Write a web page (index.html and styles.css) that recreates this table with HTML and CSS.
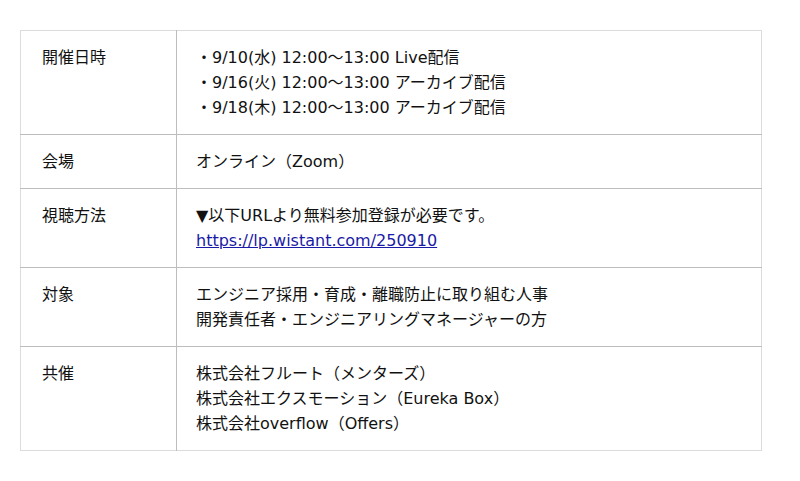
FILE: index.html
```html
<!DOCTYPE html>
<html lang="ja">
<head>
<meta charset="utf-8">
<link rel="stylesheet" href="styles.css">
</head>
<body>
<div class="page">
<table class="info">
  <tr>
    <th>開催日時</th>
    <td>・9/10(水) 12:00〜13:00 Live配信<br>・9/16(火) 12:00〜13:00 アーカイブ配信<br>・9/18(木) 12:00〜13:00 アーカイブ配信</td>
  </tr>
  <tr>
    <th>会場</th>
    <td>オンライン（Zoom）</td>
  </tr>
  <tr>
    <th>視聴方法</th>
    <td>▼以下URLより無料参加登録が必要です。<br><a href="#">https://lp.wistant.com/250910</a></td>
  </tr>
  <tr>
    <th>対象</th>
    <td>エンジニア採用・育成・離職防止に取り組む人事<br>開発責任者・エンジニアリングマネージャーの方</td>
  </tr>
  <tr>
    <th>共催</th>
    <td>株式会社フルート（メンターズ）<br>株式会社エクスモーション（Eureka Box）<br>株式会社overflow（Offers）</td>
  </tr>
</table>
</div>
</body>
</html>
```
FILE: styles.css
```css
html, body {
  margin: 0;
  padding: 0;
  background: #fff;
}
.page {
  padding: 30px 38px 0 20px;
}
.info {
  width: 742px;
  border-collapse: collapse;
  border: 1px solid #dcdcdc;
  font-family: "DejaVu Sans", "Noto Sans CJK JP", sans-serif;
  font-size: 16px;
  line-height: 25px;
  color: #111;
}
.info th,
.info td {
  padding: 14px 20px 14px 19px;
  text-align: left;
  vertical-align: top;
  font-weight: normal;
  border-top: 1px solid #bdbdbd;
}
.info th {
  width: 114px;
  padding-left: 21px;
  border-right: 1px solid #bdbdbd;
}
.info tr:first-child th,
.info tr:first-child td {
  border-top: 1px solid #dcdcdc;
}
.info a {
  color: #1a1aa6;
  text-decoration: underline;
}
```
